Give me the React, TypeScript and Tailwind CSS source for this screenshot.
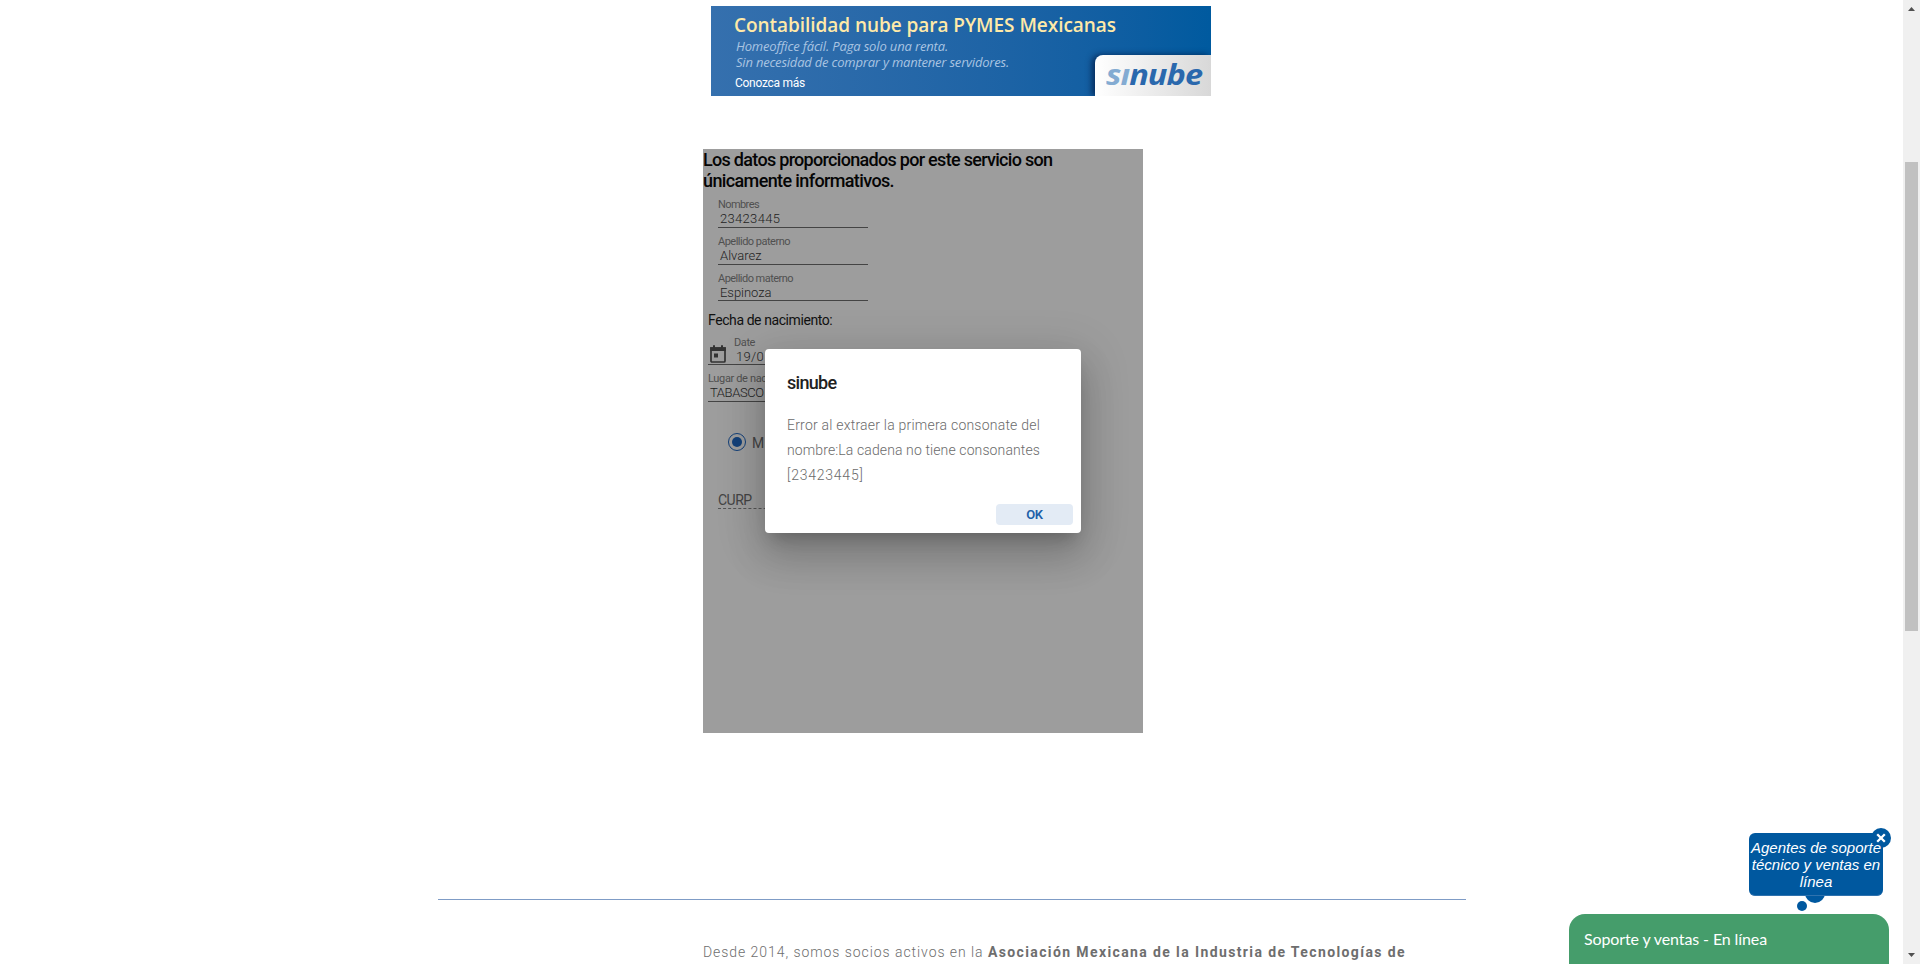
type FieldProps = { label: string; value: string; boxClass: string; labelClass: string; valueClass: string };

function Field({ label, value, boxClass, labelClass, valueClass }: FieldProps) {
  return (
    <div className={`flex w-[150px] flex-col border-b border-[#444] ${boxClass}`}>
      <span className={`h-[14px] text-[11px] leading-[16px] whitespace-nowrap text-[#505050] ${labelClass}`}>{label}</span>
      <span className={`ml-[2px] h-[15px] text-[13px] leading-[15px] font-light whitespace-nowrap text-[#222] ${valueClass}`}>{value}</span>
    </div>
  );
}

function Banner() {
  return (
    <div className="relative ml-[711px] h-[90px] w-[500px] overflow-hidden bg-linear-to-r from-[#3570ae] to-[#005a9f] whitespace-nowrap">
      <div className="flex flex-col pl-6">
        <span className="-ml-px pt-[6px] font-['Open_Sans',sans-serif] text-[19px] leading-[26px] font-semibold tracking-[-0.05px] text-[#ffe9a8]">
          Contabilidad nube para PYMES Mexicanas
        </span>
        <span className="pl-px font-['Open_Sans',sans-serif] text-[13px] leading-4 tracking-[-0.15px] text-[#a9c4e2] italic">
          Homeoffice fácil. Paga solo una renta.
        </span>
        <span className="pl-px font-['Open_Sans',sans-serif] text-[13px] leading-4 tracking-[-0.205px] text-[#a9c4e2] italic">
          Sin necesidad de comprar y mantener servidores.
        </span>
        <span className="pt-[5px] text-[12px] leading-4 tracking-[-0.266px] text-white">Conozca más</span>
      </div>
      <div className="absolute right-0 bottom-0 h-[41px] w-[116px] rounded-tl-[8px] bg-linear-to-r from-white to-[#d8d8d8] shadow-[-3px_0px_6px_rgba(0,20,60,0.7)]">
        <span className="ml-[11px] block origin-left scale-x-[1.16] font-['Open_Sans',sans-serif] text-[28px] leading-[39px] font-bold tracking-[-0.8px] text-[#2a68ad] italic">
          <span className="text-[#83abd2]">sı</span>nube
        </span>
      </div>
    </div>
  );
}

function CalendarIcon() {
  return (
    <svg className="h-[18px] w-4" viewBox="0 0 16 18" fill="none">
      <path d="M1 3.2h14V16a1 1 0 0 1-1 1H2a1 1 0 0 1-1-1z" stroke="#333" strokeWidth="1.7" />
      <path d="M.2 2.2h15.6V6H.2zM3 .3h2v2H3zM11 .3h2v2h-2zM4 8.5h4v4H4z" fill="#333" />
    </svg>
  );
}

function Dialog() {
  return (
    <div className="absolute top-[200px] left-[62px] flex h-[184px] w-[316px] flex-col rounded-[4px] bg-white pl-[22px] whitespace-nowrap shadow-[0_11px_15px_-7px_rgba(0,0,0,0.2),0_24px_38px_3px_rgba(0,0,0,0.14),0_9px_46px_8px_rgba(0,0,0,0.12)]">
      <span className="mt-[23px] text-[18px] leading-[22px] font-medium tracking-[-0.7px] text-[#212121]">sinube</span>
      <div className="mt-[19px] flex flex-col text-[14px] leading-[24.8px] font-light text-[#6b6b6b]">
        <span className="tracking-[0.217px]">Error al extraer la primera consonate del</span>
        <span className="tracking-[0.114px]">nombre:La cadena no tiene consonantes</span>
        <span className="tracking-[0.77px]">[23423445]</span>
      </div>
      <button className="absolute right-2 bottom-2 h-[21px] w-[77px] rounded-[4px] bg-[#e3ebf5] text-[13px] leading-[21px] font-semibold tracking-[-0.3px] text-[#1d5fa8]">
        OK
      </button>
    </div>
  );
}

function CurpForm() {
  return (
    <div className="relative ml-[703px] h-[584px] w-[440px] overflow-hidden bg-[#9d9d9d] whitespace-nowrap">
      <div className="flex flex-col text-[18px] leading-[21px] font-medium text-[#050505]">
        <span className="tracking-[-0.7px]">Los datos proporcionados por este servicio son</span>
        <span className="tracking-[-0.623px]">únicamente informativos.</span>
      </div>
      <div className="mt-[6px] ml-[15px] flex flex-col gap-[6px]">
        <Field label="Nombres" value="23423445" boxClass="h-[31px]" labelClass="tracking-[-0.585px]" valueClass="tracking-[0.318px]" />
        <Field label="Apellido paterno" value="Alvarez" boxClass="h-[31px]" labelClass="tracking-[-0.506px]" valueClass="tracking-[0px]" />
        <Field label="Apellido materno" value="Espinoza" boxClass="h-[30px]" labelClass="tracking-[-0.535px]" valueClass="tracking-[-0.05px]" />
      </div>
      <div className="mt-[9px] ml-[5px] text-[14px] leading-5 tracking-[-0.42px] text-[#111]">Fecha de nacimiento:</div>
      <div className="mt-[5px] ml-[5px] flex h-[30px] w-[150px] items-end border-b border-[#444]">
        <div className="mb-px ml-[2px]">
          <CalendarIcon />
        </div>
        <div className="ml-2 flex flex-col">
          <span className="h-[14px] text-[11px] leading-[16px] tracking-[-0.41px] text-[#505050]">Date</span>
          <span className="ml-[2px] w-[28px] overflow-hidden text-[13px] leading-[15px] font-light tracking-[0.3px] text-[#222]">19/0</span>
        </div>
      </div>
      <div className="mt-[6px] ml-[5px]">
        <Field label="Lugar de nac" value="TABASCO" boxClass="h-[31px]" labelClass="tracking-[-0.35px]" valueClass="tracking-[-0.4px]" />
      </div>
      <div className="mt-[31px] ml-[25px] flex h-[18px] items-center">
        <div className="flex size-[18px] items-center justify-center rounded-full border-[1.5px] border-[#134079]">
          <div className="size-[10px] rounded-full bg-[#134079]" />
        </div>
        <span className="mt-[2px] ml-[6px] text-[14px] leading-[18px] text-[#444]">M</span>
      </div>
      <div className="mt-[40px] ml-[15px] h-[18px] w-[150px] border-b border-dashed border-[#555] text-[14px] leading-[18px] tracking-[-0.5px] text-[#444]">
        CURP
      </div>
      <Dialog />
    </div>
  );
}

function SupportChat() {
  return (
    <div className="absolute right-[14px] bottom-0 flex w-[320px] flex-col items-end">
      <div className="relative mr-[6px] mb-[18px] h-[63px] w-[134px]">
        <div className="absolute bottom-[-7px] left-[56px] size-[20px] rounded-full bg-[#00589f]" />
        <div className="absolute bottom-[-15px] left-[48px] size-[10px] rounded-full bg-[#00589f]" />
        <div className="relative h-[63px] rounded-[6px] border-b border-[#2f72ae] bg-[#00589f] pt-[6px] text-center font-['Liberation_Sans',sans-serif] text-[15px] leading-[17px] whitespace-nowrap text-white italic">
          <div>Agentes de soporte</div>
          <div>técnico y ventas en</div>
          <div>línea</div>
        </div>
        <div className="absolute top-[-5px] right-[-8px] -z-10 size-[20px] rounded-full bg-[#00589f]" />
        <svg className="absolute top-0 right-[-3px] size-[10px]" viewBox="0 0 10 10">
          <path d="M1.2 1.2l7.6 7.6M8.8 1.2L1.2 8.8" stroke="#fff" strokeWidth="2.3" />
        </svg>
      </div>
      <div className="h-[50px] w-[320px] rounded-t-[16px] bg-[#459d6b] pl-[15px] font-['Lato',sans-serif] text-[16px] leading-[50px] tracking-[-0.112px] text-white">
        Soporte y ventas - En línea
      </div>
    </div>
  );
}

function Scrollbar() {
  return (
    <div className="flex h-[964px] w-[17px] flex-col items-center bg-[#f0f0f0]">
      <svg className="mt-[7px] h-[4px] w-[7px]" viewBox="0 0 7 4">
        <path d="M0 4L3.5 0 7 4z" fill="#505050" />
      </svg>
      <div className="mt-[151px] h-[469px] w-[13px] bg-[#c1c1c1]" />
      <svg className="mt-auto mb-[7px] h-[4px] w-[7px]" viewBox="0 0 7 4">
        <path d="M0 0h7L3.5 4z" fill="#505050" />
      </svg>
    </div>
  );
}

export default function App() {
  return (
    <div className="flex h-[964px] w-[1920px] overflow-hidden bg-white font-['Roboto',sans-serif]">
      <main className="relative isolate h-[964px] w-[1903px] overflow-hidden pt-[6px]">
        <Banner />
        <div className="mt-[53px]">
          <CurpForm />
        </div>
        <hr className="mt-[166px] ml-[438px] h-px w-[1028px] border-0 bg-[#7f9cc6]" />
        <p className="mt-[42px] ml-[703px] text-[14px] leading-5 font-light whitespace-nowrap text-[#6e6e6e]">
          <span className="tracking-[0.94px]">Desde 2014, somos socios activos en la </span>
          <b className="font-bold tracking-[1.383px]">Asociación Mexicana de la Industria de Tecnologías de</b>
        </p>
        <SupportChat />
      </main>
      <Scrollbar />
    </div>
  );
}
